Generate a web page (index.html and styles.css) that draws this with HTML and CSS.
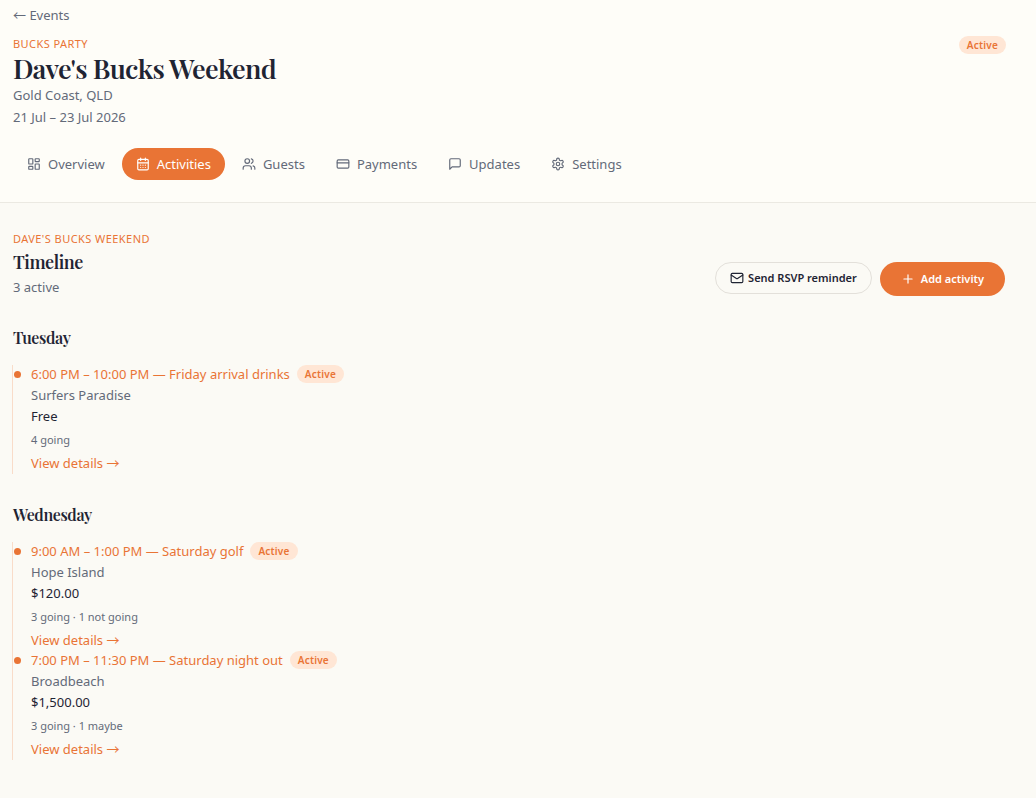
FILE: index.html
```html
<!DOCTYPE html>
<html lang="en">
<head>
<meta charset="utf-8">
<meta name="viewport" content="width=device-width, initial-scale=1">
<title>Dave's Bucks Weekend</title>
<link rel="stylesheet" href="styles.css">
</head>
<body>
<header class="event-header">
  <a class="back-link" href="#"><span class="arrow">←</span> Events</a>
  <div class="event-top">
    <div class="event-info">
      <p class="eyebrow">BUCKS PARTY</p>
      <h1 class="event-title">Dave's Bucks Weekend</h1>
      <p class="muted">Gold Coast, QLD</p>
      <p class="muted">21 Jul – 23 Jul 2026</p>
    </div>
    <span class="badge">Active</span>
  </div>
  <nav class="tabs" aria-label="Event sections">
    <a class="tab" href="#"><svg class="icon" viewBox="0 0 24 24"><rect x="3" y="3" width="7" height="9" rx="1"/><rect x="14" y="3" width="7" height="5" rx="1"/><rect x="14" y="12" width="7" height="9" rx="1"/><rect x="3" y="16" width="7" height="5" rx="1"/></svg>Overview</a>
    <a class="tab tab-active" href="#" aria-current="page"><svg class="icon" viewBox="0 0 24 24"><path d="M8 2v4M16 2v4M3 10h18M8 14h.01M12 14h.01M16 14h.01M8 18h.01M12 18h.01M16 18h.01"/><rect x="3" y="4" width="18" height="18" rx="2"/></svg>Activities</a>
    <a class="tab" href="#"><svg class="icon" viewBox="0 0 24 24"><path d="M16 21v-2a4 4 0 0 0-4-4H6a4 4 0 0 0-4 4v2"/><circle cx="9" cy="7" r="4"/><path d="M22 21v-2a4 4 0 0 0-3-3.87M16 3.13a4 4 0 0 1 0 7.75"/></svg>Guests</a>
    <a class="tab" href="#"><svg class="icon" viewBox="0 0 24 24"><rect x="2" y="5" width="20" height="14" rx="2"/><path d="M2 10h20"/></svg>Payments</a>
    <a class="tab" href="#"><svg class="icon" viewBox="0 0 24 24"><path d="M21 15a2 2 0 0 1-2 2H7l-4 4V5a2 2 0 0 1 2-2h14a2 2 0 0 1 2 2z"/></svg>Updates</a>
    <a class="tab" href="#"><svg class="icon" viewBox="0 0 24 24"><path d="M12.22 2h-.44a2 2 0 0 0-2 2v.18a2 2 0 0 1-1 1.73l-.43.25a2 2 0 0 1-2 0l-.15-.08a2 2 0 0 0-2.73.73l-.22.38a2 2 0 0 0 .73 2.73l.15.1a2 2 0 0 1 1 1.72v.51a2 2 0 0 1-1 1.74l-.15.09a2 2 0 0 0-.73 2.73l.22.38a2 2 0 0 0 2.73.73l.15-.08a2 2 0 0 1 2 0l.43.25a2 2 0 0 1 1 1.73V20a2 2 0 0 0 2 2h.44a2 2 0 0 0 2-2v-.18a2 2 0 0 1 1-1.73l.43-.25a2 2 0 0 1 2 0l.15.08a2 2 0 0 0 2.73-.73l.22-.39a2 2 0 0 0-.73-2.73l-.15-.08a2 2 0 0 1-1-1.74v-.5a2 2 0 0 1 1-1.74l.15-.09a2 2 0 0 0 .73-2.73l-.22-.38a2 2 0 0 0-2.73-.73l-.15.08a2 2 0 0 1-2 0l-.43-.25a2 2 0 0 1-1-1.73V4a2 2 0 0 0-2-2z"/><circle cx="12" cy="12" r="3"/></svg>Settings</a>
  </nav>
</header>
<main class="content">
  <div class="section-head">
    <div>
      <p class="eyebrow">DAVE'S BUCKS WEEKEND</p>
      <h2 class="section-title">Timeline</h2>
      <p class="muted">3 active</p>
    </div>
    <div class="actions">
      <button class="btn btn-outline" type="button"><svg class="icon" viewBox="0 0 24 24"><rect x="2" y="4" width="20" height="16" rx="2"/><path d="m22 7-8.97 5.7a1.94 1.94 0 0 1-2.06 0L2 7"/></svg>Send RSVP reminder</button>
      <button class="btn btn-primary" type="button"><svg class="icon" viewBox="0 0 24 24"><path d="M5 12h14M12 5v14"/></svg>Add activity</button>
    </div>
  </div>
  <section class="day">
    <h3 class="day-title">Tuesday</h3>
    <ul class="timeline">
      <li class="activity">
        <div class="activity-head"><a class="accent" href="#">6:00 PM – 10:00 PM — Friday arrival drinks</a><span class="badge">Active</span></div>
        <p class="muted">Surfers Paradise</p>
        <p class="price">Free</p>
        <p class="going">4 going</p>
        <a class="accent details" href="#">View details <span class="arrow">→</span></a>
      </li>
    </ul>
  </section>
  <section class="day">
    <h3 class="day-title">Wednesday</h3>
    <ul class="timeline">
      <li class="activity">
        <div class="activity-head"><a class="accent" href="#">9:00 AM – 1:00 PM — Saturday golf</a><span class="badge">Active</span></div>
        <p class="muted">Hope Island</p>
        <p class="price">$120.00</p>
        <p class="going">3 going · 1 not going</p>
        <a class="accent details" href="#">View details <span class="arrow">→</span></a>
      </li>
      <li class="activity">
        <div class="activity-head"><a class="accent" href="#">7:00 PM – 11:30 PM — Saturday night out</a><span class="badge">Active</span></div>
        <p class="muted">Broadbeach</p>
        <p class="price">$1,500.00</p>
        <p class="going">3 going · 1 maybe</p>
        <a class="accent details" href="#">View details <span class="arrow">→</span></a>
      </li>
    </ul>
  </section>
</main>
</body>
</html>
```
FILE: styles.css
```css
* { box-sizing: border-box; }

body {
  margin: 0;
  background: #fbfaf5;
  color: #1f2433;
  font-family: "Noto Sans", sans-serif;
  font-size: 13px;
  line-height: 22px;
}

h1, h2, h3, p, ul { margin: 0; padding: 0; }
ul { list-style: none; }
a { color: inherit; text-decoration: none; }

.event-header {
  padding: 4px 30px 22px 13px;
  background: #fefdf8;
  border-bottom: 1px solid #ebe9e2;
}

.back-link {
  display: block;
  width: fit-content;
  color: #636a79;
}

.arrow {
  font-family: "Noto Sans CJK SC", sans-serif;
  line-height: 1;
}

.event-top {
  display: flex;
  justify-content: space-between;
  align-items: flex-start;
  padding-top: 10px;
}

.eyebrow {
  color: #e97435;
  font-size: 11px;
  line-height: 16px;
  letter-spacing: 0.04em;
}

.event-title,
.section-title,
.day-title {
  font-family: "Playfair Display", "Liberation Serif", serif;
  font-weight: 600;
  letter-spacing: -0.025em;
}

.event-title {
  font-size: 27px;
  line-height: 32px;
}

.muted { color: #636a79; }

.badge {
  flex: none;
  padding: 0 8px;
  border-radius: 9px;
  background: #ffe6d5;
  color: #e97435;
  font-size: 10px;
  font-weight: 600;
  line-height: 18px;
  letter-spacing: 0.02em;
}

.tabs {
  display: flex;
  flex-wrap: wrap;
  gap: 3px;
  padding-top: 20px;
}

.tab {
  display: flex;
  align-items: center;
  gap: 7px;
  height: 32px;
  padding: 0 14px;
  border-radius: 16px;
  color: #636a79;
}

.tab-active {
  background: #e97435;
  color: #fff;
}

.icon {
  flex: none;
  width: 14px;
  height: 14px;
  fill: none;
  stroke: currentColor;
  stroke-width: 2;
  stroke-linecap: round;
  stroke-linejoin: round;
}

.content { padding: 28px 31px 38px 13px; }

.section-head {
  display: flex;
  justify-content: space-between;
  align-items: flex-end;
}

.section-title {
  padding-top: 1px;
  font-size: 18px;
  line-height: 28px;
}

.actions {
  display: flex;
  gap: 8px;
  align-items: flex-start;
  padding-bottom: 2px;
}

.btn {
  display: flex;
  align-items: center;
  border-radius: 17px;
  font: 600 11px/16px "Noto Sans", sans-serif;
}

.btn-outline {
  gap: 4px;
  height: 32px;
  padding: 0 14px;
  border: 1px solid #e3e0da;
  background: transparent;
  color: #1f2433;
}

.btn-primary {
  gap: 6px;
  height: 34px;
  padding: 0 21px;
  border: 0;
  background: #e97435;
  color: #fff;
}

.day { padding: 29px 0 1px; }

.day-title {
  font-size: 16px;
  line-height: 21px;
}

.timeline {
  margin: 17px 0 0 -1px;
  border-left: 1px solid #f9dcc9;
}

.activity {
  position: relative;
  padding: 0 0 1px 18px;
}

.activity::before {
  content: "";
  position: absolute;
  top: 6px;
  left: 1px;
  width: 7px;
  height: 7px;
  border-radius: 50%;
  background: #e97435;
}

.activity-head {
  display: flex;
  gap: 7px;
  align-items: center;
  line-height: 18px;
  padding-bottom: 1px;
}

.accent { color: #e97435; }

.price { line-height: 21px; }

.going {
  padding-top: 2px;
  color: #636a79;
  font-size: 11px;
}

.details {
  display: block;
  line-height: 20px;
  padding-top: 2px;
}
```
